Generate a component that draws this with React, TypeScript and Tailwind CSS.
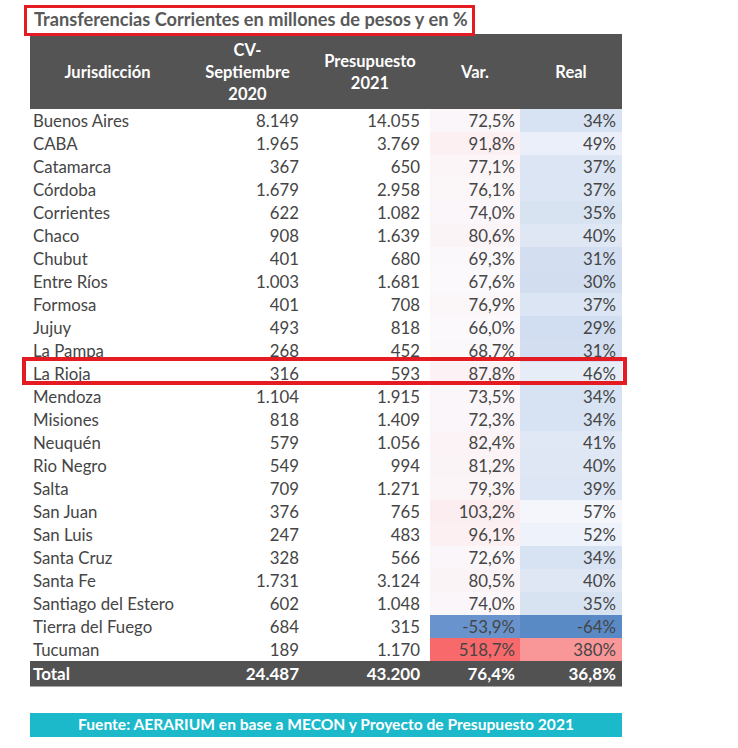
import React from 'react';

type Row = {
  name: string;
  cv: string;
  pres: string;
  varPct: string;
  real: string;
  varBg: string;
  realBg: string;
};

// colour scale (blue - white - red) precomputed per cell, like the Excel sheet
const ROWS: Row[] = [
  { name: 'Buenos Aires', cv: '8.149', pres: '14.055', varPct: '72,5%', real: '34%', varBg: 'bg-[#fbf6f9]', realBg: 'bg-[#d7e2f2]' },
  { name: 'CABA', cv: '1.965', pres: '3.769', varPct: '91,8%', real: '49%', varBg: 'bg-[#fcf0f3]', realBg: 'bg-[#eaeff9]' },
  { name: 'Catamarca', cv: '367', pres: '650', varPct: '77,1%', real: '37%', varBg: 'bg-[#fbf5f8]', realBg: 'bg-[#dbe5f3]' },
  { name: 'Córdoba', cv: '1.679', pres: '2.958', varPct: '76,1%', real: '37%', varBg: 'bg-[#fbf6f8]', realBg: 'bg-[#dbe5f3]' },
  { name: 'Corrientes', cv: '622', pres: '1.082', varPct: '74,0%', real: '35%', varBg: 'bg-[#fbf6f9]', realBg: 'bg-[#d8e3f2]' },
  { name: 'Chaco', cv: '908', pres: '1.639', varPct: '80,6%', real: '40%', varBg: 'bg-[#fbf4f7]', realBg: 'bg-[#dfe7f5]' },
  { name: 'Chubut', cv: '401', pres: '680', varPct: '69,3%', real: '31%', varBg: 'bg-[#fbf8fb]', realBg: 'bg-[#d3dff1]' },
  { name: 'Entre Ríos', cv: '1.003', pres: '1.681', varPct: '67,6%', real: '30%', varBg: 'bg-[#fbf9fc]', realBg: 'bg-[#d2def0]' },
  { name: 'Formosa', cv: '401', pres: '708', varPct: '76,9%', real: '37%', varBg: 'bg-[#fbf6f8]', realBg: 'bg-[#dbe5f3]' },
  { name: 'Jujuy', cv: '493', pres: '818', varPct: '66,0%', real: '29%', varBg: 'bg-[#fbf9fc]', realBg: 'bg-[#d1ddf0]' },
  { name: 'La Pampa', cv: '268', pres: '452', varPct: '68,7%', real: '31%', varBg: 'bg-[#fbf8fb]', realBg: 'bg-[#d3dff1]' },
  { name: 'La Rioja', cv: '316', pres: '593', varPct: '87,8%', real: '46%', varBg: 'bg-[#fcf1f4]', realBg: 'bg-[#e6edf7]' },
  { name: 'Mendoza', cv: '1.104', pres: '1.915', varPct: '73,5%', real: '34%', varBg: 'bg-[#fbf6f9]', realBg: 'bg-[#d7e2f2]' },
  { name: 'Misiones', cv: '818', pres: '1.409', varPct: '72,3%', real: '34%', varBg: 'bg-[#fbf6f9]', realBg: 'bg-[#d7e2f2]' },
  { name: 'Neuquén', cv: '579', pres: '1.056', varPct: '82,4%', real: '41%', varBg: 'bg-[#fbf3f6]', realBg: 'bg-[#e0e8f5]' },
  { name: 'Rio Negro', cv: '549', pres: '994', varPct: '81,2%', real: '40%', varBg: 'bg-[#fbf4f7]', realBg: 'bg-[#dfe7f5]' },
  { name: 'Salta', cv: '709', pres: '1.271', varPct: '79,3%', real: '39%', varBg: 'bg-[#fbf5f7]', realBg: 'bg-[#dde6f4]' },
  { name: 'San Juan', cv: '376', pres: '765', varPct: '103,2%', real: '57%', varBg: 'bg-[#fcedf0]', realBg: 'bg-[#f4f6fb]' },
  { name: 'San Luis', cv: '247', pres: '483', varPct: '96,1%', real: '52%', varBg: 'bg-[#fcf0f2]', realBg: 'bg-[#eef2fa]' },
  { name: 'Santa Cruz', cv: '328', pres: '566', varPct: '72,6%', real: '34%', varBg: 'bg-[#fbf6f9]', realBg: 'bg-[#d7e2f2]' },
  { name: 'Santa Fe', cv: '1.731', pres: '3.124', varPct: '80,5%', real: '40%', varBg: 'bg-[#fbf4f7]', realBg: 'bg-[#dfe7f5]' },
  { name: 'Santiago del Estero', cv: '602', pres: '1.048', varPct: '74,0%', real: '35%', varBg: 'bg-[#fbf6f9]', realBg: 'bg-[#d8e3f2]' },
  { name: 'Tierra del Fuego', cv: '684', pres: '315', varPct: '-53,9%', real: '-64%', varBg: 'bg-[#6993cd]', realBg: 'bg-[#5a8ac6]' },
  { name: 'Tucuman', cv: '189', pres: '1.170', varPct: '518,7%', real: '380%', varBg: 'bg-[#f8696b]', realBg: 'bg-[#f99698]' },
];

const COLS = 'grid grid-cols-[155px_125px_120px_90px_102px]';

export default function App() {
  return (
    <div className="relative w-[738px] h-[748px] bg-white pl-[30px] font-['Lato','Noto_Sans',sans-serif]">
      <div className="w-[592px]">
        <div className="h-[34px] flex items-end pb-[6px] pl-[4px] text-[18.2px] font-bold text-[#595959] leading-none whitespace-nowrap">
          Transferencias Corrientes en millones de pesos y en %
        </div>

        <div className={`${COLS} h-[75px] bg-[#545454] text-white font-bold text-[16.5px] leading-[22px] text-center items-center`}>
          <div>Jurisdicción</div>
          <div>
            CV-
            <br />
            Septiembre
            <br />
            2020
          </div>
          <div>
            Presupuesto
            <br />
            2021
          </div>
          <div>Var.</div>
          <div>Real</div>
        </div>

        <div className="text-[16.8px] text-[#454545]">
          {ROWS.map((r) => (
            <div key={r.name} className={`${COLS} h-[23px] items-stretch leading-none pt-[2px]`}>
              <div className="flex items-center pl-[3px] whitespace-nowrap">{r.name}</div>
              <div className="flex items-center justify-end pr-[11px]">{r.cv}</div>
              <div className="flex items-center justify-end pr-[10px]">{r.pres}</div>
              <div className={`flex items-center justify-end pr-[5px] -mt-[2px] ${r.varBg}`}>
                <span className="pt-[2px]">{r.varPct}</span>
              </div>
              <div className={`flex items-center justify-end pr-[6px] -mt-[2px] ${r.realBg}`}>
                <span className="pt-[2px]">{r.real}</span>
              </div>
            </div>
          ))}
        </div>

        <div className={`${COLS} h-[26px] bg-[#525252] text-white font-bold text-[17px] border-b border-[#a5a5a5]`}>
          <div className="flex items-center pl-[3px]">Total</div>
          <div className="flex items-center justify-end pr-[11px]">24.487</div>
          <div className="flex items-center justify-end pr-[10px]">43.200</div>
          <div className="flex items-center justify-end pr-[5px]">76,4%</div>
          <div className="flex items-center justify-end pr-[6px]">36,8%</div>
        </div>

        <div className="mt-[26px] h-[24px] bg-[#1cb9cb] flex items-center justify-center text-white font-bold text-[15.6px] whitespace-nowrap">
          Fuente: AERARIUM en base a MECON y Proyecto de Presupuesto 2021
        </div>
      </div>

      {/* red highlight frames */}
      <div className="absolute left-[24px] top-[5px] w-[451px] h-[31px] border-[3px] border-[#e51b24]" />
      <div className="absolute left-[22px] top-[357px] w-[605px] h-[28px] border-[4px] border-[#e51b24]" />
    </div>
  );
}
